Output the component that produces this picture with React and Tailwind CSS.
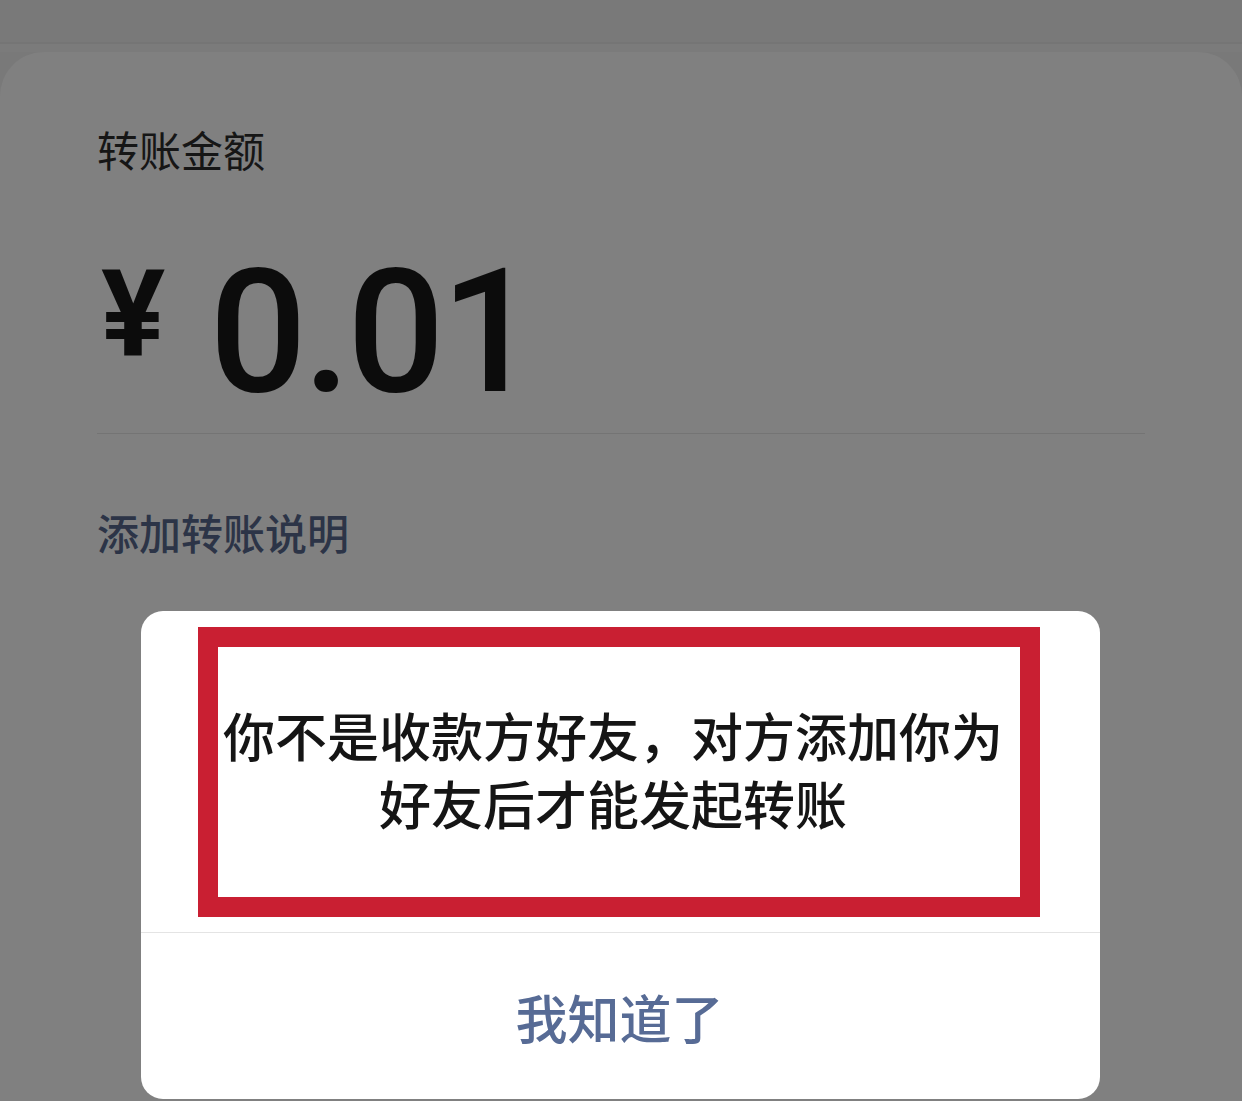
export default function App() {
  const cjk = { fontFamily: '"Noto Sans CJK SC", "Noto Sans", sans-serif' };
  return (
    <div className="relative w-[1242px] h-[1101px] overflow-hidden bg-[#797979] flex flex-col" style={cjk}>
      <div className="h-[52px] shrink-0 flex flex-col">
        <div className="h-[42px] bg-[#797979]"></div>
        <div className="h-[2px] bg-[#757575]"></div>
        <div className="flex-1 bg-[#7b7b7b]"></div>
      </div>
      <div className="flex-1 bg-[#808080] rounded-t-[44px] px-[97px] pt-[76px]">
        <div className="text-[42px] leading-[42px] text-[#161616]">转账金额</div>
        <div className="flex items-start mt-[75px] h-[188px]">
          <span
            className="text-[120px] leading-none font-bold text-[#0c0c0c] ml-[4px] mt-[10px]"
            style={{ fontFamily: 'Roboto, "Noto Sans", sans-serif' }}
          >
            ¥
          </span>
          <span
            className="text-[172px] leading-none font-medium text-[#0c0c0c] ml-[44px] tracking-[-4px] mt-[1px]"
            style={{ fontFamily: 'Roboto, "Noto Sans", sans-serif' }}
          >
            0.01
          </span>
        </div>
        <div className="h-[1px] bg-[#747474]"></div>
        <div className="mt-[77px] text-[42px] leading-[42px] text-[#2c3447] font-medium">添加转账说明</div>
      </div>

      <div className="absolute left-[141px] top-[611px] w-[959px] h-[488px] bg-white rounded-[22px] flex flex-col">
        <div className="pt-[16px] pl-[57px]">
          <div className="w-[842px] h-[290px] border-[20px] border-[#c91f32] flex flex-col items-center justify-center">
            <div className="text-[52px] leading-[68px] text-[#151515] font-medium text-center -ml-[12px] -mt-[7px]">
              <div>你不是收款方好友，对方添加你为</div>
              <div>好友后才能发起转账</div>
            </div>
          </div>
        </div>
        <div className="mt-[15px] h-[1px] bg-[#e4e4e4]"></div>
        <div className="flex-1 flex items-center justify-center">
          <span className="text-[52px] leading-none font-medium text-[#576b95] -ml-[2px] mt-[2px]">我知道了</span>
        </div>
      </div>
    </div>
  );
}
